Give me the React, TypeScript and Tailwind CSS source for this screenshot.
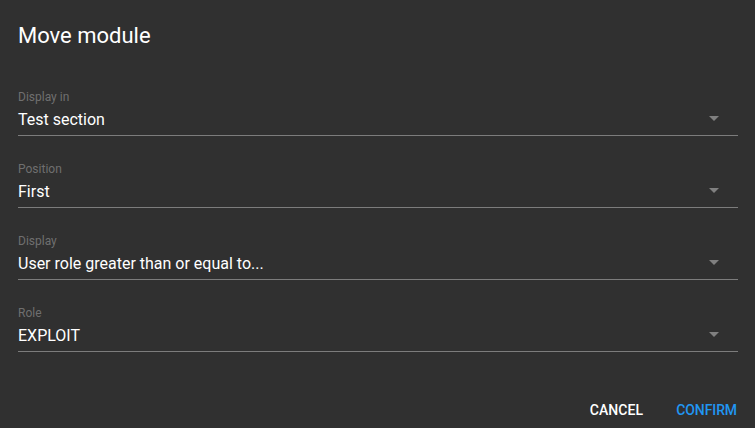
const fields = [
  { label: "Display in", value: "Test section" },
  { label: "Position", value: "First" },
  { label: "Display", value: "User role greater than or equal to..." },
  { label: "Role", value: "EXPLOIT" },
];

const SelectField = ({ label, value }: { label: string; value: string }) => {
  return (
    <div className="flex flex-col">
      <label className="h-4 text-xs leading-4 text-[#6f6f6f]">{label}</label>
      <div className="relative flex items-center border-b border-[#7c7c7c] pt-[3px] pb-[3px]">
        <span className="h-6 text-base leading-6 text-white">{value}</span>
        {/** Dropdown arrow */}
        <svg
          className="absolute right-[19px] top-[11px]"
          width="10"
          height="5"
          viewBox="0 0 10 5"
        >
          <path d="M0 0 L10 0 L5 5 Z" fill="#808080" />
        </svg>
      </div>
    </div>
  );
};

export default function App() {
  return (
    <div
      className="flex h-[428px] w-[755px] flex-col overflow-hidden bg-[#303030]"
      style={{ fontFamily: "Roboto, 'Liberation Sans', sans-serif" }}
    >
      <h2 className="pl-[18px] pt-[20px] text-[22px] leading-8 text-white">
        Move module
      </h2>
      <div className="flex flex-col gap-[25px] pl-[18px] pr-[17px] pt-[37px]">
        {fields.map((f) => (
          <SelectField key={f.label} label={f.label} value={f.value} />
        ))}
      </div>
      <div className="flex justify-end pr-[10px] pt-[40px]">
        <button className="h-9 px-2 text-sm font-medium uppercase tracking-[0.1px] text-white">
          Cancel
        </button>
        <button className="ml-[17px] h-9 px-2 text-sm font-medium uppercase tracking-[-0.1px] text-[#2196f3]">
          Confirm
        </button>
      </div>
    </div>
  );
}
